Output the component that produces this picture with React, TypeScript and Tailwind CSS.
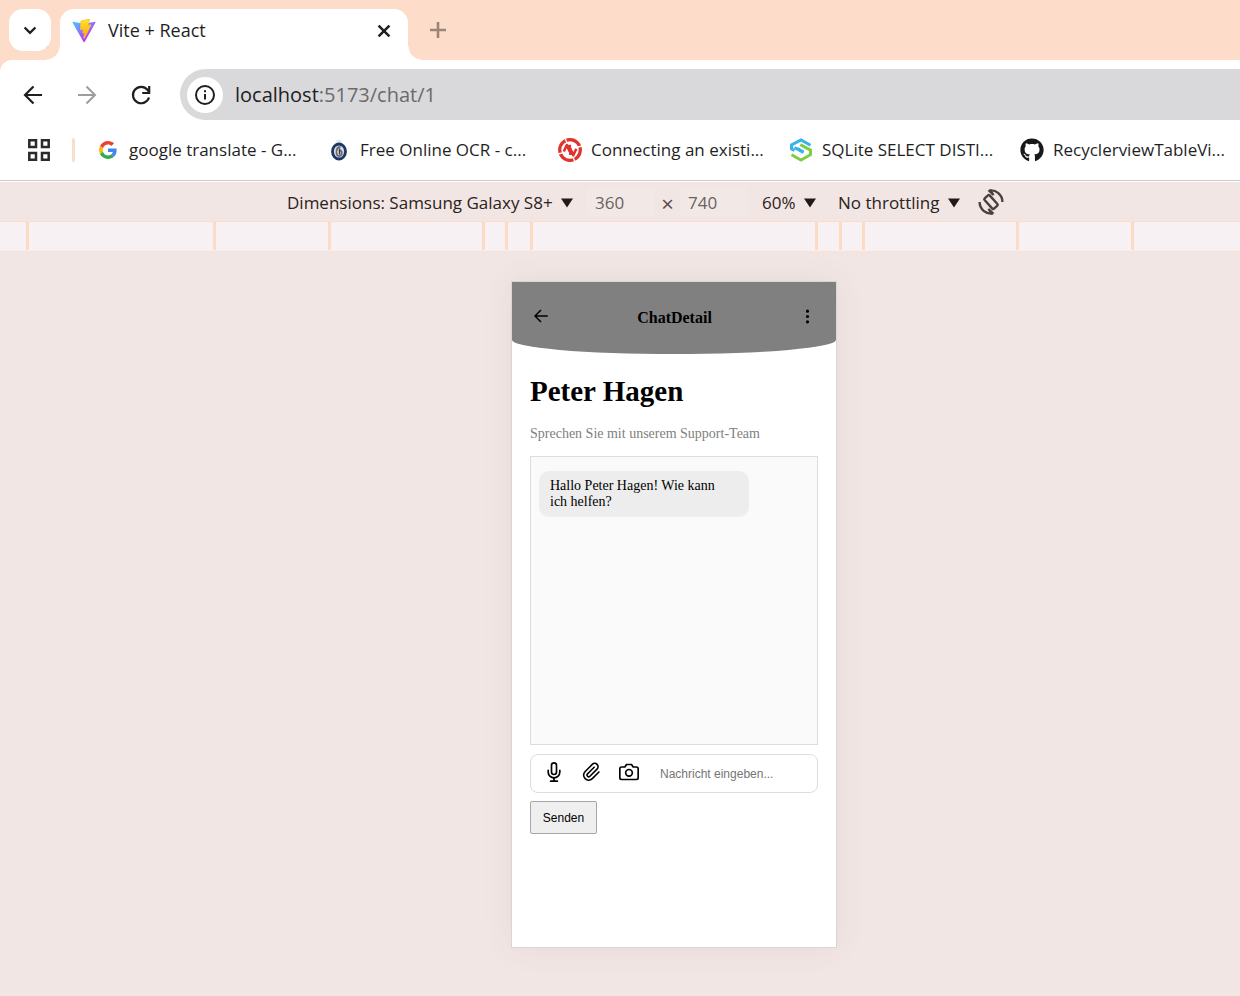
import type { ReactNode } from "react";
import { FaGithub } from "react-icons/fa";
import { FiCamera, FiMic } from "react-icons/fi";
import { GrAttachment } from "react-icons/gr";
import { BsThreeDotsVertical } from "react-icons/bs";

function ViteLogo() {
  return (
    <svg viewBox="0 0 410 404" className="size-6" aria-hidden="true">
      <defs>
        <linearGradient id="vite-body" x1="6" y1="33" x2="235" y2="344" gradientUnits="userSpaceOnUse">
          <stop stopColor="#41D1FF" />
          <stop offset="1" stopColor="#BD34FE" />
        </linearGradient>
        <linearGradient id="vite-bolt" x1="194" y1="9" x2="237" y2="292" gradientUnits="userSpaceOnUse">
          <stop stopColor="#FFEA83" />
          <stop offset="0.083" stopColor="#FFDD35" />
          <stop offset="1" stopColor="#FFA800" />
        </linearGradient>
      </defs>
      <path
        fill="url(#vite-body)"
        d="M399.641 59.525 215.643 388.545C211.844 395.338 202.084 395.378 198.228 388.618L10.582 59.556C6.381 52.19 12.68 43.267 21.028 44.759L205.223 77.682C206.398 77.893 207.602 77.891 208.776 77.676L389.119 44.806C397.439 43.289 403.768 52.143 399.641 59.525Z"
      />
      <path
        fill="url(#vite-bolt)"
        stroke="#ffc21c"
        strokeWidth="14"
        d="M292.965 1.574 156.801 28.255C154.563 28.694 152.906 30.59 152.771 32.866L144.395 174.33C144.198 177.662 147.258 180.248 150.51 179.498L188.42 170.749C191.967 169.931 195.172 173.055 194.443 176.622L183.18 231.775C182.422 235.487 185.907 238.661 189.532 237.56L212.947 230.446C216.577 229.344 220.065 232.527 219.297 236.242L201.398 322.875C200.278 328.294 207.486 331.249 210.492 326.603L212.5 323.5 323.454 102.072C325.312 98.365 322.108 94.137 318.036 94.923L279.014 102.454C275.347 103.161 272.227 99.746 273.262 96.158L298.731 7.867C299.767 4.273 296.636.855 292.965 1.574Z"
      />
    </svg>
  );
}

function GoogleLogo() {
  return (
    <svg viewBox="0 0 48 48" className="size-[18px]" aria-hidden="true">
      <path fill="#EA4335" d="M24 9.5c3.5 0 6.700 1.200 9.200 3.600l6.900-6.900C35.900 2.400 30.500 0 24 0 14.600 0 6.500 5.400 2.600 13.200l8 6.200C12.400 13.700 17.700 9.500 24 9.500z" />
      <path fill="#4285F4" d="M47 24.500c0-1.600-.2-3.100-.4-4.500H24v9h12.900c-.6 3-2.200 5.500-4.800 7.200l7.700 6C44.400 38 47 31.800 47 24.500z" />
      <path fill="#FBBC05" d="M10.500 28.600A14.500 14.500 0 0 1 9.800 24c0-1.600.3-3.100.8-4.600l-8-6.200A24 24 0 0 0 0 24c0 3.900.9 7.500 2.600 10.800z" />
      <path fill="#34A853" d="M24 48c6.500 0 11.900-2.100 15.900-5.800l-7.700-6c-2.200 1.400-4.900 2.300-8.200 2.300-6.300 0-11.600-4.200-13.500-9.900l-7.900 6.200C6.500 42.600 14.600 48 24 48z" />
    </svg>
  );
}

function OcrLogo() {
  return (
    <svg viewBox="0 0 24 24" className="size-6" aria-hidden="true">
      <circle cx="12" cy="4.500" r="2.800" fill="#e3e6e8" />
      <ellipse cx="12" cy="13.500" rx="6.500" ry="7.500" fill="#d9dce0" stroke="#1d3768" strokeWidth="2.800" />
      <path d="M13.500 9c-3 0-4 2-4 5s1 4 2.500 4 2.800-1.200 2.800-2.900-.8-2.600-2-2.600" fill="none" stroke="#6b6f75" strokeWidth="1.800" />
      <path d="M12.500 10.500v6" stroke="#35383d" strokeWidth="1.300" />
    </svg>
  );
}

function ConnectLogo() {
  return (
    <svg viewBox="0 0 24 24" className="size-6" fill="none" stroke="#e2322b" aria-hidden="true">
      <circle cx="12" cy="12" r="10.300" strokeWidth="3.200" />
      <path stroke="#fff" strokeWidth="1.300" d="M7 0 9 5M15 19l2 5M0 16l4-1M20 9l4-1" />
      <path strokeWidth="2.600" strokeLinejoin="round" d="M5.800 13.500 8.800 7l2.900 6.500V6.800M12.300 17v-6.500l3 6.800 3-6.500" />
    </svg>
  );
}

function SqliteTutorialLogo() {
  return (
    <svg viewBox="0 0 24 24" className="size-6" fill="none" strokeWidth="3" aria-hidden="true">
      <path stroke="#35b4ea" d="m21.500 7.300-9.500-5.300-9.500 5v5M5.500 9.500l9 5" />
      <path stroke="#35b4ea" d="m2.500 11 3 1.500M8.500 10.500l6 3.500" />
      <path stroke="#80cc45" d="m2.500 16.700 9.500 5.300 9.500-5.300v-4.600L11.300 6.600" />
    </svg>
  );
}

function RotateIcon() {
  return (
    <svg viewBox="0 0 26 26" className="size-[26px]" fill="none" stroke="#4b403d" strokeWidth="2.400" aria-hidden="true">
      <rect x="9.600" y="6" width="6.800" height="14" rx="1.200" transform="rotate(-42 13 13)" />
      <path d="M11 1.600A11.500 11.500 0 0 1 24.400 13M15 24.400A11.500 11.500 0 0 1 1.600 13" />
      <path fill="#4b403d" stroke="none" d="M9.500 1.800 13 .300l3.500 5.200-1.800 1.300zM16.500 24.200 13 25.700l-3.500-5.200 1.800-1.300z" />
    </svg>
  );
}

function Triangle() {
  return (
    <svg viewBox="0 0 12 10" className="h-[10px] w-3 shrink-0" aria-hidden="true">
      <path d="M0 .500h12L6 9.500z" fill="#231a18" />
    </svg>
  );
}

function LineIcon({ children, className }: { children: ReactNode; className: string }) {
  return (
    <svg viewBox="0 0 24 24" className={className} fill="none" stroke="currentColor" aria-hidden="true">
      {children}
    </svg>
  );
}

function TabStrip() {
  return (
    <div className="flex h-[60px] items-end bg-[#fddcc9]">
      <div className="flex h-full w-[60px] items-start pt-[9px] pl-[9px]">
        <button aria-label="Search tabs" className="flex size-[42px] items-center justify-center rounded-[14px] bg-white text-[#1f1f1f]">
          <LineIcon className="size-5">
            <path d="m5.500 9 6.500 6.500L18.500 9" strokeWidth="2.800" />
          </LineIcon>
        </button>
      </div>
      <div className="relative flex h-[51px] w-[348px] items-center rounded-t-[14px] bg-white pr-[14px] pb-2 pl-3">
        <span className="absolute bottom-0 -left-[14px] size-[14px] bg-[radial-gradient(circle_at_0_0,#fddcc9_13px,#fff_14px)]" />
        <span className="absolute -right-[14px] bottom-0 size-[14px] bg-[radial-gradient(circle_at_100%_0,#fddcc9_13px,#fff_14px)]" />
        <ViteLogo />
        <span className="ml-3 flex-1 text-[18px]">Vite + React</span>
        <button aria-label="Close tab" className="text-[#1f1f1f]">
          <LineIcon className="size-5">
            <path d="m5.500 5.500 13 13m0-13-13 13" strokeWidth="3" />
          </LineIcon>
        </button>
      </div>
      <button aria-label="New tab" className="mb-[18px] ml-[18px] text-[#9a857a]">
        <LineIcon className="size-6">
          <path d="M12 4v16M4 12h16" strokeWidth="2.600" />
        </LineIcon>
      </button>
    </div>
  );
}

function AddressRow() {
  return (
    <div className="bg-[#fddcc9]">
      <div className="flex h-[60px] items-center rounded-tl-[12px] bg-white pt-[9px] pl-[21px]">
        <button aria-label="Back" className="text-[#1f1f1f]">
          <LineIcon className="size-6">
            <path d="M21 12H4m8.500-8.500L4 12l8.500 8.500" strokeWidth="2.200" />
          </LineIcon>
        </button>
        <button aria-label="Forward" className="ml-[30px] text-[#9d9d9d]">
          <LineIcon className="size-6">
            <path d="M3 12h17m-8.500-8.500L20 12l-8.500 8.500" strokeWidth="2" />
          </LineIcon>
        </button>
        <button aria-label="Reload" className="ml-[30px] text-[#1f1f1f]">
          <LineIcon className="size-6">
            <path d="M20 14.500A8.200 8.200 0 1 1 18.500 6.800L20 9" strokeWidth="2.200" />
            <path d="M20.200 3v7h-7" strokeWidth="2.200" />
          </LineIcon>
        </button>
        <div className="ml-[27px] flex h-[51px] flex-1 items-center rounded-l-full bg-[#d9d9db] pl-[7px]">
          <button aria-label="View site information" className="flex size-9 items-center justify-center rounded-full bg-white text-[#1f1f1f]">
            <LineIcon className="size-6">
              <circle cx="12" cy="12" r="9" strokeWidth="2" />
              <path d="M12 11v5.500M12 7.200v2" strokeWidth="2" />
            </LineIcon>
          </button>
          <div role="textbox" aria-label="Address" tabIndex={0} className="ml-3 flex-1 text-[20px] text-[#6a6a6c]">
            <span className="text-[#202022]">localhost</span>:5173/chat/1
          </div>
        </div>
      </div>
    </div>
  );
}

const bookmarks = [
  { label: "google translate - G...", icon: <GoogleLogo /> },
  { label: "Free Online OCR - c...", icon: <OcrLogo /> },
  { label: "Connecting an existi...", icon: <ConnectLogo /> },
  { label: "SQLite SELECT DISTI...", icon: <SqliteTutorialLogo /> },
  { label: "RecyclerviewTableVi...", icon: <FaGithub className="size-6 text-[#181818]" /> },
];

function BookmarksBar() {
  return (
    <nav className="flex h-[61px] items-center overflow-hidden border-b border-[#c9c9c9] bg-white pl-[27px]">
      <button aria-label="Apps" className="shrink-0 text-[#2a2a2a]">
        <LineIcon className="size-6">
          <path d="M2.300 2.300h6.700v6.700h-6.700zM15 2.300h6.700v6.700H15zM2.300 15h6.700v6.700h-6.700zM15 15h6.700v6.700H15z" strokeWidth="2.500" />
        </LineIcon>
      </button>
      <span className="mr-[21px] ml-[21px] h-6 w-[3px] shrink-0 rounded-full bg-[#fddcc9]" />
      {bookmarks.map((b) => (
        <a key={b.label} href="#" className="flex w-[231px] shrink-0 items-center gap-[9px] whitespace-nowrap">
          <span className="flex w-6 shrink-0 justify-center">{b.icon}</span>
          {b.label}
        </a>
      ))}
    </nav>
  );
}

function Choice({ label, value }: { label: string; value: string }) {
  return (
    <label className="flex items-center gap-2">
      <select aria-label={label} className="appearance-none bg-transparent text-[#2b2220]">
        <option>{value}</option>
      </select>
      <Triangle />
    </label>
  );
}

function DeviceToolbar() {
  return (
    <div className="mt-px flex h-10 items-center justify-center border-b border-[#fddcc9] bg-[#f1e6e4] pt-[2px] pl-[51px]">
      <Choice label="Device" value="Dimensions: Samsung Galaxy S8+" />
      <input aria-label="Width" defaultValue="360" className="ml-[14px] h-[27px] w-[68px] rounded bg-[#f2e9e7] pl-2 text-[#6a6260]" />
      <span className="w-[25px] text-center text-[22px] leading-6 text-[#5a4d4a]">×</span>
      <input aria-label="Height" defaultValue="740" className="mr-[14px] h-[27px] w-[68px] rounded bg-[#f2e9e7] pl-2 text-[#6a6260]" />
      <Choice label="Zoom" value="60%" />
      <span className="w-[22px]" />
      <Choice label="Throttling" value="No throttling" />
      <button aria-label="Rotate" className="ml-[18px] pb-[2px]">
        <RotateIcon />
      </button>
    </div>
  );
}

function BreakpointRuler() {
  const segment = "shrink-0 border-r-[3px] border-[#fddac4]";
  return (
    <div className="flex h-[30px] overflow-hidden border-b border-[#f9e0d5] bg-[#f7f1f3] pb-px">
      <span className={`${segment} w-[29px]`} />
      <span className={`${segment} w-[187px]`} />
      <span className={`${segment} w-[115px]`} />
      <span className={`${segment} w-[154px]`} />
      <span className={`${segment} w-[23px]`} />
      <span className={`${segment} w-[25px]`} />
      <span className={`${segment} w-[285px]`} />
      <span className={`${segment} w-[24px]`} />
      <span className={`${segment} w-[23px]`} />
      <span className={`${segment} w-[154px]`} />
      <span className={`${segment} w-[115px]`} />
    </div>
  );
}

function ChatScreen() {
  return (
    <section className="w-[326px] border border-[#d8d6d9] bg-white pb-[113px] font-['Liberation_Serif',serif] text-black shadow-[0_0_30px_rgba(120,80,90,0.07)]">
      <header className="flex h-[72px] items-center justify-between rounded-[0_0_50%_50%/0_0_14px_14px] bg-[#808080] px-5">
        <button aria-label="Zurück" className="pb-1">
          <LineIcon className="size-[18px]">
            <path d="M21 12H4m8-8-8 8 8 8" strokeWidth="2" />
          </LineIcon>
        </button>
        <h2 className="text-[16px] font-bold">ChatDetail</h2>
        <button aria-label="Menü" className="pb-1">
          <BsThreeDotsVertical className="size-[17px]" />
        </button>
      </header>
      <div className="px-[18px]">
        <h1 className="mt-[21px] text-[29px] leading-8 font-bold">Peter Hagen</h1>
        <p className="mt-[19px] text-[14px] leading-4 text-[#808080]">Sprechen Sie mit unserem Support-Team</p>
        <div className="mt-[14px] h-[289px] border border-[#dddddd] bg-[#fafafa] px-2 py-[14px]">
          <p className="w-[210px] rounded-[10px] bg-[#ededed] py-[7px] pr-6 pl-[11px] text-[14px] leading-4">
            Hallo Peter Hagen! Wie kann ich helfen?
          </p>
        </div>
        <form className="font-['Liberation_Sans',sans-serif] text-[12px]" onSubmit={(e) => e.preventDefault()}>
          <div className="mt-[9px] flex h-[39px] items-center rounded-lg border border-[#dddddd] px-[13px]">
            <button type="button" aria-label="Sprachnachricht" className="pb-1">
              <FiMic className="size-5" />
            </button>
            <button type="button" aria-label="Datei anhängen" className="ml-[18px] pb-1">
              <GrAttachment className="size-[19px]" />
            </button>
            <button type="button" aria-label="Foto aufnehmen" className="ml-[18px] pb-1">
              <FiCamera className="size-5" />
            </button>
            <input aria-label="Nachricht" placeholder="Nachricht eingeben..." className="ml-[21px] min-w-0 flex-1 placeholder:text-[#757575]" />
          </div>
          <button type="submit" className="mt-2 h-[33px] w-[67px] rounded-[2px] border border-[#a6a6a6] bg-[#efefef]">
            Senden
          </button>
        </form>
      </div>
    </section>
  );
}

export default function App() {
  return (
    <div className="flex min-h-screen flex-col overflow-hidden bg-white font-['Open_Sans',sans-serif] text-[17px] text-[#1f1f1f]">
      <TabStrip />
      <AddressRow />
      <BookmarksBar />
      <DeviceToolbar />
      <BreakpointRuler />
      <main className="flex flex-1 items-start justify-center bg-[#f1e6e4] pt-[29px] pb-10 pl-[108px]">
        <ChatScreen />
      </main>
    </div>
  );
}
